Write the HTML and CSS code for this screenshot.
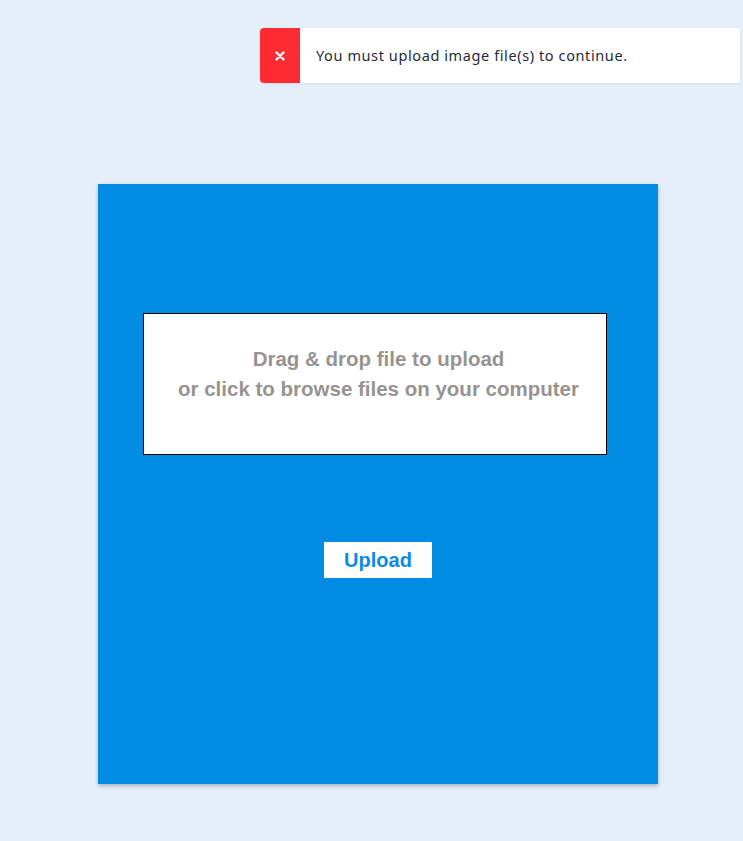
FILE: index.html
```html
<!DOCTYPE html>
<html>
<head>
<meta charset="utf-8">
<link rel="stylesheet" href="styles.css">
</head>
<body>
<div class="toast">
  <div class="toast-icon">
    <svg width="10" height="10" viewBox="0 0 10 10"><path d="M1.5 1.5 L8.5 8.5 M8.5 1.5 L1.5 8.5" stroke="#fff" stroke-width="2.4" stroke-linecap="round"/></svg>
  </div>
  <div class="toast-text">You must upload image file(s) to continue.</div>
</div>
<main class="page">
  <section class="card">
    <div class="dropzone">
      <p>Drag &amp; drop file to upload<br>or click to browse files on your computer</p>
    </div>
    <button class="upload">Upload</button>
  </section>
</main>
</body>
</html>
```
FILE: styles.css
```css
html, body {
  margin: 0;
  padding: 0;
  background: #e5eff9;
  height: 100%;
}
body {
  font-family: "Liberation Sans", Arial, sans-serif;
}
.toast {
  position: absolute;
  left: 260px;
  top: 28px;
  width: 480px;
  height: 55px;
  display: flex;
  align-items: center;
  background: #fff;
  border-radius: 4px;
  overflow: hidden;
  box-shadow: 0 1px 3px rgba(0,0,0,0.08);
}
.toast-icon {
  width: 40px;
  height: 100%;
  background: #fe2b33;
  display: flex;
  align-items: center;
  justify-content: center;
  flex: none;
}
.toast-text {
  padding-left: 16px;
  padding-bottom: 1px;
  font-family: "Noto Sans", sans-serif;
  font-size: 14.5px;
  letter-spacing: 0.6px;
  color: #262a3a;
}
.page {
  padding-top: 184px;
  padding-left: 98px;
}
.card {
  width: 560px;
  height: 600px;
  background: #008ce4;
  box-shadow: 0 2px 4px rgba(0,0,0,0.25);
  display: flex;
  flex-direction: column;
  padding-top: 129px;
  box-sizing: border-box;
}
.dropzone {
  margin-left: 45px;
  width: 464px;
  height: 142px;
  box-sizing: border-box;
  background: #fff;
  border: 1px solid #000;
  display: flex;
  justify-content: center;
  padding-left: 7px;
  padding-top: 30px;
}
.dropzone p {
  margin: 0;
  text-align: center;
  font-weight: bold;
  font-size: 20.5px;
  line-height: 30px;
  color: #979390;
}
.upload {
  align-self: center;
  margin-top: 87px;
  width: 108px;
  height: 36px;
  background: #fff;
  border: none;
  padding: 0;
  font-family: "Liberation Sans", Arial, sans-serif;
  font-weight: bold;
  font-size: 20px;
  color: #0b8ae2;
}
```
